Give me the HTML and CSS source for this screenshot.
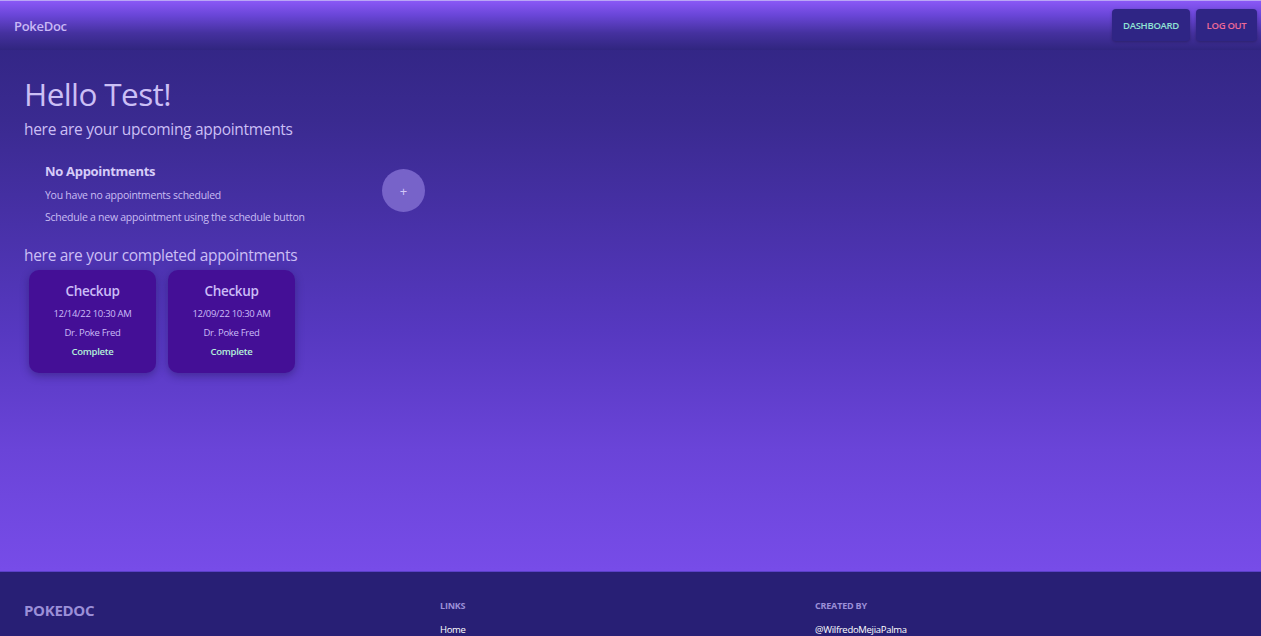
FILE: index.html
```html
<!DOCTYPE html>
<html>
<head>
<meta charset="utf-8">
<link rel="stylesheet" href="styles.css">
</head>
<body>
<div class="page">
  <header class="topbar">
    <div class="brand">PokeDoc</div>
    <nav class="navbtns">
      <a class="navbtn dash">DASHBOARD</a>
      <a class="navbtn logout">LOG OUT</a>
    </nav>
  </header>
  <main class="main">
    <h1 class="hello">Hello Test!</h1>
    <h2 class="sub">here are your upcoming appointments</h2>
    <div class="upcoming">
      <div class="empty">
        <div class="empty-title">No Appointments</div>
        <div class="empty-line">You have no appointments scheduled</div>
        <div class="empty-line">Schedule a new appointment using the schedule button</div>
      </div>
      <button class="addbtn">+</button>
    </div>
    <h2 class="sub sub2">here are your completed appointments</h2>
    <div class="cards">
      <div class="card">
        <div class="card-title">Checkup</div>
        <div class="card-line">12/14/22 10:30 AM</div>
        <div class="card-line">Dr. Poke Fred</div>
        <div class="card-status">Complete</div>
      </div>
      <div class="card">
        <div class="card-title">Checkup</div>
        <div class="card-line">12/09/22 10:30 AM</div>
        <div class="card-line">Dr. Poke Fred</div>
        <div class="card-status">Complete</div>
      </div>
    </div>
  </main>
  <footer class="footer">
    <div class="fcol fbrand">POKEDOC</div>
    <div class="fcol flinks">
      <div class="fhead">LINKS</div>
      <div class="fitem">Home</div>
    </div>
    <div class="fcol fcreated">
      <div class="fhead">CREATED BY</div>
      <div class="fitem">@WilfredoMejiaPalma</div>
    </div>
  </footer>
</div>
</body>
</html>
```

FILE: styles.css
```css
* { box-sizing: border-box; }
html, body { margin: 0; padding: 0; }
body {
  font-family: "Open Sans", "Noto Sans", sans-serif;
  background: #281f75;
  width: 1261px;
  height: 636px;
  overflow: hidden;
}
.page {
  display: flex;
  flex-direction: column;
  height: 636px;
  background: linear-gradient(180deg, #2f2480 0px, #3a2a90 120px, #5638c0 330px, #6a44d8 450px, #774ce8 570px);
}
.topbar {
  height: 50px;
  border-top: 1px solid #b9a6f5;
  display: flex;
  align-items: center;
  justify-content: space-between;
  padding: 0 4px 0 14px;
  background: linear-gradient(180deg, #8a58f6 0px, #6a46d8 14px, #45319f 32px, #30257f 49px);
}
.brand {
  color: #c9b8f6;
  font-size: 13px;
  font-weight: 600;
  letter-spacing: -0.3px;
}
.navbtns { display: flex; gap: 6px; margin-top: -1px; }
.navbtn {
  display: flex;
  align-items: center;
  justify-content: center;
  height: 32px;
  border-radius: 4px;
  background: #2f2585;
  box-shadow: 0 1px 3px rgba(0,0,0,0.25);
  font-size: 9.5px;
  font-weight: 600;
  letter-spacing: -0.3px;
  white-space: nowrap;
}
.dash { color: #8fe3d4; width: 78px; }
.logout { color: #ef6a97; width: 61px; }
.main {
  flex: 1;
  padding: 0 24px;
}
.hello {
  margin: 24px 0 0 0;
  font-size: 31.5px;
  font-weight: 400;
  color: #cbbff5;
  line-height: 40px;
  letter-spacing: -0.6px;
}
.sub {
  margin: 4px 0 0 0;
  font-size: 15.5px;
  font-weight: 400;
  color: #cbbff5;
  line-height: 22px;
  letter-spacing: -0.3px;
}
.upcoming {
  display: flex;
  align-items: flex-start;
  margin-top: 21px;
}
.empty {
  padding-left: 21px;
  width: 358px;
}
.empty-title {
  color: #d6ccf8;
  font-size: 13px;
  font-weight: 700;
  line-height: 20px;
  letter-spacing: -0.3px;
}
.empty-line {
  color: #c9bdf3;
  font-size: 10.5px;
  line-height: 14px;
  margin-top: 7px;
  letter-spacing: -0.25px;
}
.empty-line + .empty-line { margin-top: 8px; }
.addbtn {
  width: 43px;
  height: 43px;
  border-radius: 50%;
  border: none;
  background: #7763c9;
  color: #d2c8f8;
  font-size: 13px;
  margin-top: 8px;
  padding: 0;
  font-family: inherit;
}
.sub2 { margin-top: 20px; }
.cards {
  display: flex;
  gap: 12px;
  padding-left: 5px;
  margin-top: 4px;
}
.card {
  width: 127px;
  height: 103px;
  border-radius: 10px;
  background: #440f96;
  box-shadow: 0 3px 8px rgba(20,10,60,0.35);
  display: flex;
  flex-direction: column;
  align-items: center;
  padding-top: 11px;
}
.card-title {
  color: #cbbcf7;
  font-size: 13.5px;
  font-weight: 600;
  line-height: 20px;
  letter-spacing: -0.3px;
}
.card-line {
  color: #cbbcf7;
  font-size: 9.5px;
  line-height: 13px;
  margin-top: 6px;
  letter-spacing: -0.3px;
}
.card-status {
  color: #b4f0da;
  font-size: 9.5px;
  font-weight: 600;
  line-height: 13px;
  margin-top: 6px;
  letter-spacing: -0.3px;
}
.footer {
  height: 65px;
  background: #281f75;
  border-top: 1px solid #5a40c8;
  display: flex;
  padding: 0 24px;
}
.fcol { padding-top: 28px; }
.fbrand {
  width: 416px;
  color: #9b8fd8;
  font-size: 15px;
  font-weight: 700;
  padding-top: 28px;
  letter-spacing: -0.3px;
}
.flinks { width: 375px; }
.fhead {
  color: #9b8fd8;
  font-size: 9px;
  font-weight: 700;
  line-height: 12px;
  letter-spacing: -0.2px;
}
.fitem {
  color: #ffffff;
  font-size: 9.5px;
  line-height: 13px;
  margin-top: 11px;
  letter-spacing: -0.3px;
}
```
